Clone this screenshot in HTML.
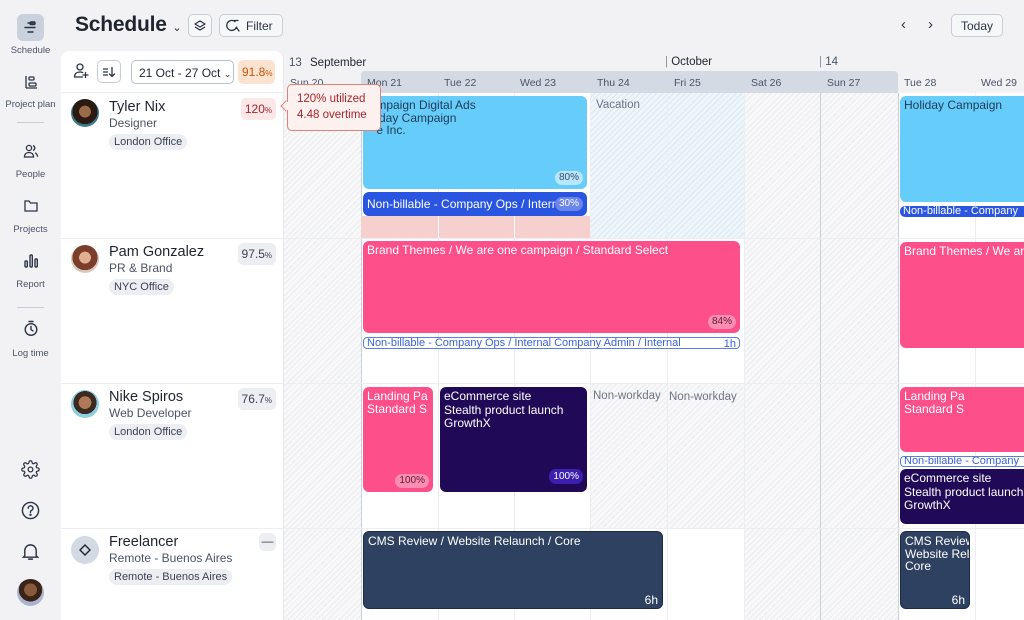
<!DOCTYPE html>
<html><head><meta charset="utf-8"><style>
*{box-sizing:border-box;margin:0;padding:0}
body{width:1024px;height:620px;overflow:hidden;background:#f2f2f5;font-family:"Liberation Sans",sans-serif;color:#1f2430;position:relative}
.a{position:absolute}
.nav{position:absolute;left:0;width:61px;text-align:center;font-size:9.5px;color:#4a5366}
.nav svg{display:block;margin:0 auto 6px}
.hatch{background:repeating-linear-gradient(135deg,#f8f8f9 0 3px,#ebecef 3px 4px)}
.hatchb{background:repeating-linear-gradient(135deg,#eef6fb 0 3px,#d9e8f2 3px 4px)}
.vl{position:absolute;top:93px;bottom:0;width:1px;background:#eceef1}
.hl{position:absolute;left:284px;right:0;height:1px;background:#eceef1}
.ev{position:absolute;border-radius:6px;font-size:12px;line-height:12.5px;padding:3px 4px;overflow:hidden;white-space:nowrap}
.pill{position:absolute;right:4px;bottom:4px;font-size:10px;padding:1px 4px;border-radius:7px}
.name{position:absolute;left:109px;font-size:14.5px;color:#1f2430}
.role{position:absolute;left:109px;font-size:12px;color:#4a5366}
.tag{position:absolute;left:109px;font-size:11px;color:#3a4254;background:#eceef2;border-radius:8px;padding:2px 5px}
.pct{position:absolute;right:748px;font-size:12px;background:#eceef2;border-radius:5px;padding:4px 4px;color:#3a4254}
.pct small{font-size:8px}
.av{position:absolute;left:71px;width:28px;height:28px;border-radius:50%}
.day{position:absolute;top:77px;font-size:10.5px;color:#4a5366}
</style></head><body>
<!-- sidebar -->
<div class="a" style="left:17px;top:14px;width:27px;height:27px;border-radius:6px;background:#c9d1dc"></div>
<svg class="a" style="left:22px;top:19px" width="17" height="17" viewBox="0 0 17 17" fill="none" stroke="#2b3445" stroke-width="1.4" stroke-linecap="round"><path d="M6 4h6M3 8.5h10M6 13h5"/><rect x="8" y="3" width="5" height="2.5" rx="1"/></svg>
<div class="nav" style="top:45px">Schedule</div>
<div class="nav" style="top:74px"><svg width="16" height="16" viewBox="0 0 16 16" fill="none" stroke="#2b3445" stroke-width="1.3"><path d="M3 2v12M3 14h11"/><rect x="6" y="3" width="5" height="3" rx="1"/><rect x="6" y="9" width="7" height="3" rx="1"/></svg><span style="position:relative;top:3px">Project plan</span></div>
<div class="a" style="left:17px;top:122px;width:27px;height:1px;background:#c6cdd8"></div>
<div class="nav" style="top:143px"><svg width="16" height="17" viewBox="0 0 16 17" fill="none" stroke="#2b3445" stroke-width="1.3"><circle cx="6" cy="5" r="2.6"/><path d="M1.5 14c0-3 2-4.5 4.5-4.5S10.5 11 10.5 14z"/><path d="M10 2.6a2.5 2.5 0 0 1 0 4.8M12 9.8c1.5.6 2.5 2 2.5 4"/></svg><span style="position:relative;top:3px">People</span></div>
<div class="nav" style="top:198px"><svg width="16" height="16" viewBox="0 0 16 16" fill="none" stroke="#2b3445" stroke-width="1.3"><path d="M2 3h4l1.5 2H14v8H2z"/></svg><span style="position:relative;top:4px">Projects</span></div>
<div class="nav" style="top:253px"><svg width="16" height="16" viewBox="0 0 16 16" fill="none" stroke="#2b3445" stroke-width="1.4"><rect x="2" y="8" width="2.3" height="6" rx="1"/><rect x="7" y="2" width="2.3" height="12" rx="1"/><rect x="12" y="6" width="2.3" height="8" rx="1"/></svg><span style="position:relative;top:4px">Report</span></div>
<div class="a" style="left:17px;top:307px;width:27px;height:1px;background:#c6cdd8"></div>
<div class="nav" style="top:320px"><svg width="16" height="17" viewBox="0 0 16 17" fill="none" stroke="#2b3445" stroke-width="1.4" stroke-linecap="round"><circle cx="8" cy="9.5" r="5.8"/><path d="M6 1.5h4M8 6.5v3l2 1.5"/></svg><span style="position:relative;top:5px">Log time</span></div>
<svg class="a" style="left:21px;top:460px" width="19" height="19" viewBox="0 0 24 24" fill="none" stroke="#2b3445" stroke-width="1.6"><circle cx="12" cy="12" r="3"/><path d="M19.4 15a1.7 1.7 0 0 0 .3 1.8l.1.1a2 2 0 1 1-2.8 2.8l-.1-.1a1.7 1.7 0 0 0-1.8-.3 1.7 1.7 0 0 0-1 1.5V21a2 2 0 1 1-4 0v-.1a1.7 1.7 0 0 0-1.1-1.5 1.7 1.7 0 0 0-1.8.3l-.1.1a2 2 0 1 1-2.8-2.8l.1-.1a1.7 1.7 0 0 0 .3-1.8 1.7 1.7 0 0 0-1.5-1H3a2 2 0 1 1 0-4h.1a1.7 1.7 0 0 0 1.5-1.1 1.7 1.7 0 0 0-.3-1.8l-.1-.1a2 2 0 1 1 2.8-2.8l.1.1a1.7 1.7 0 0 0 1.8.3H9a1.7 1.7 0 0 0 1-1.5V3a2 2 0 1 1 4 0v.1a1.7 1.7 0 0 0 1 1.5 1.7 1.7 0 0 0 1.8-.3l.1-.1a2 2 0 1 1 2.8 2.8l-.1.1a1.7 1.7 0 0 0-.3 1.8V9a1.7 1.7 0 0 0 1.5 1H21a2 2 0 1 1 0 4h-.1a1.7 1.7 0 0 0-1.5 1z"/></svg>
<svg class="a" style="left:21px;top:501px" width="19" height="19" viewBox="0 0 20 20" fill="none" stroke="#2b3445" stroke-width="1.5" stroke-linecap="round"><circle cx="10" cy="10" r="8.5"/><path d="M7.6 7.6a2.5 2.5 0 1 1 3.4 2.3c-.6.3-1 .8-1 1.5v.6"/><circle cx="10" cy="14.6" r=".5" fill="#2b3445"/></svg>
<svg class="a" style="left:21px;top:542px" width="19" height="19" viewBox="0 0 20 20" fill="none" stroke="#2b3445" stroke-width="1.5" stroke-linecap="round"><path d="M4 14.5V9a6 6 0 0 1 12 0v5.5l1.5 1.5h-15zM8 18h4"/></svg>
<div class="a" style="left:17px;top:579px;width:27px;height:27px;border-radius:50%;background:radial-gradient(circle at 50% 40%,#8a5a3c 0 30%,#3a2418 31% 55%,#aab4cf 56%)"></div>

<!-- top bar -->
<div class="a" style="left:75px;top:13px;font-size:21px;font-weight:bold;color:#1f2430;letter-spacing:-.2px">Schedule <span style="font-size:11px;font-weight:normal">⌄</span></div>
<div class="a" style="left:188px;top:14px;width:24px;height:23px;border:1px solid #c6cdd8;border-radius:5px;background:#f6f7f9"><svg style="position:absolute;left:4px;top:4px" width="14" height="14" viewBox="0 0 14 14" fill="none" stroke="#2b3445" stroke-width="1.3" stroke-linejoin="round"><path d="M7 2l5 3-5 3-5-3z"/><path d="M2 8l5 3 5-3"/></svg></div>
<div class="a" style="left:219px;top:14px;width:64px;height:23px;border:1px solid #c6cdd8;border-radius:5px;background:#f6f7f9;font-size:12px;padding:4px 0 0 26px;color:#2b3445">Filter<svg style="position:absolute;left:6px;top:4px" width="14" height="14" viewBox="0 0 14 14" fill="none" stroke="#2b3445" stroke-width="1.3" stroke-linecap="round"><path d="M9 2.6A5 5 0 1 0 10.5 8M8 1.5h4M10.5 8.5l2.5 3.5"/></svg></div>
<div class="a" style="left:901px;top:16px;font-size:15px;color:#2b3445">‹</div>
<div class="a" style="left:928px;top:16px;font-size:15px;color:#2b3445">›</div>
<div class="a" style="left:951px;top:14px;width:52px;height:23px;border:1px solid #c6cdd8;border-radius:5px;background:#f6f7f9;font-size:12px;text-align:center;padding-top:4px;color:#2b3445">Today</div>

<!-- calendar area -->
<div class="a" style="left:284px;top:93px;right:0;bottom:0;background:#fff"></div>
<div class="a hatch" style="left:284px;top:93px;width:77px;bottom:0"></div>
<div class="a hatch" style="left:744px;top:93px;width:154px;bottom:0"></div>
<div class="a hatchb" style="left:590px;top:93px;width:154px;height:145px"></div>
<div class="a hatch" style="left:590px;top:383px;width:154px;height:145px"></div>
<div class="vl" style="left:361px;background:#c9d1dc"></div>
<div class="vl" style="left:438px"></div><div class="vl" style="left:514px"></div><div class="vl" style="left:590px"></div><div class="vl" style="left:667px"></div><div class="vl" style="left:744px"></div><div class="vl" style="left:820px;background:#c9d1dc"></div><div class="vl" style="left:898px;background:#c9d1dc"></div><div class="vl" style="left:975px"></div>
<div class="hl" style="top:238px"></div><div class="hl" style="top:383px"></div><div class="hl" style="top:528px"></div>
<!-- header -->
<div class="a" style="left:284px;top:51px;right:0;height:42px;background:#f2f2f5"></div>
<div class="a" style="left:361px;top:71px;width:537px;height:22px;background:#d3dae4;border-radius:4px 4px 0 0"></div>
<div class="a" style="left:289px;top:57px;font-size:11.5px;color:#4a5366">13 <span style="color:#1f2430;margin-left:5px">September</span></div>
<div class="a" style="left:665px;top:56px;font-size:11.5px;color:#1f2430"><span style="color:#8a93a5">|</span> October</div>
<div class="a" style="left:819px;top:56px;font-size:11.5px;color:#4a5366"><span style="color:#8a93a5">|</span> 14</div>
<div class="day" style="left:290px">Sun 20</div><div class="day" style="left:367px">Mon 21</div><div class="day" style="left:444px">Tue 22</div><div class="day" style="left:520px">Wed 23</div><div class="day" style="left:597px">Thu 24</div><div class="day" style="left:674px">Fri 25</div><div class="day" style="left:751px">Sat 26</div><div class="day" style="left:827px">Sun 27</div><div class="day" style="left:904px">Tue 28</div><div class="day" style="left:981px">Wed 29</div>

<!-- row1 events -->
<div class="a" style="left:361px;top:216px;width:229px;height:22px;background:#f6d0cf"></div>
<div class="a" style="left:438px;top:216px;width:1px;height:22px;background:#fff"></div><div class="a" style="left:514px;top:216px;width:1px;height:22px;background:#fff"></div>
<div class="ev" style="left:363px;top:96px;width:224px;height:93px;background:#66cdfb;color:#1f3a55;padding-left:0;padding-top:3px">&nbsp;&nbsp;&nbsp;&nbsp;mpaign Digital Ads<br>&nbsp;&nbsp;&nbsp;&nbsp;iday Campaign<br>&nbsp;&nbsp;&nbsp;&nbsp;e Inc.<span class="pill" style="background:#b8e6fd;color:#3a4d63">80%</span></div>
<div class="ev" style="left:363px;top:192px;width:224px;height:24px;background:#2a55e0;color:#fff;padding-top:6px">Non-billable - Company Ops / Intern<span class="pill" style="background:#6b86ea;color:#fff;bottom:5px">30%</span></div>
<div class="a" style="left:596px;top:99px;font-size:11.5px;color:#6b7385">Vacation</div>
<div class="ev" style="left:900px;top:96px;width:130px;height:106px;background:#66cdfb;color:#1f3a55">Holiday Campaign</div>
<div class="ev" style="left:900px;top:206px;width:130px;height:11px;background:#2a55e0;color:#fff;font-size:11px;line-height:10px;padding:0 3px;border-radius:5px">Non-billable - Company</div>
<!-- row2 -->
<div class="ev" style="left:363px;top:241px;width:377px;height:92px;background:#fd4f8a;color:#fff">Brand Themes / We are one campaign / Standard Select<span class="pill" style="background:#fd8db2;color:#5a2136">84%</span></div>
<div class="ev" style="left:363px;top:337px;width:377px;height:12px;border:1px solid #5b7fe0;color:#3b62d6;font-size:11px;line-height:10px;padding:0 3px;border-radius:4px;background:#fff">Non-billable - Company Ops / Internal Company Admin / Internal<span style="position:absolute;right:3px;top:1px">1h</span></div>
<div class="ev" style="left:900px;top:242px;width:130px;height:106px;background:#fd4f8a;color:#fff">Brand Themes / We are</div>
<!-- row3 -->
<div class="ev" style="left:363px;top:387px;width:70px;height:105px;background:#fd4f8a;color:#fff">Landing Pa<br>Standard S<span class="pill" style="background:#fd8db2;color:#5a2136">100%</span></div>
<div class="ev" style="left:440px;top:387px;width:147px;height:105px;background:#200a58;color:#fff;line-height:13.5px">eCommerce site<br>Stealth product launch<br>GrowthX<span class="pill" style="background:#3c1fb0;color:#fff;bottom:8px">100%</span></div>
<div class="a" style="left:593px;top:390px;font-size:11.5px;color:#6b7385">Non-workday</div>
<div class="a" style="left:669px;top:391px;font-size:11.5px;color:#6b7385">Non-workday</div>
<div class="ev" style="left:900px;top:387px;width:130px;height:65px;background:#fd4f8a;color:#fff">Landing Pa<br>Standard S</div>
<div class="ev" style="left:900px;top:456px;width:130px;height:11px;border:1px solid #5b7fe0;color:#3b62d6;font-size:11px;line-height:9px;padding:0 3px;border-radius:4px;background:#fff">Non-billable - Company</div>
<div class="ev" style="left:900px;top:469px;width:130px;height:55px;background:#200a58;color:#fff;line-height:13.5px">eCommerce site<br>Stealth product launch<br>GrowthX</div>
<!-- row4 -->
<div class="ev" style="left:363px;top:531px;width:300px;height:78px;background:#2f4161;color:#fff;border:1px solid #1e2b45">CMS Review / Website Relaunch / Core<span style="position:absolute;right:4px;bottom:2px;font-size:12px">6h</span></div>
<div class="ev" style="left:900px;top:531px;width:70px;height:78px;background:#2f4161;color:#fff;border:1px solid #1e2b45">CMS Review<br>Website Rel<br>Core<span style="position:absolute;right:4px;bottom:2px">6h</span></div>

<!-- left panel -->
<div class="a" style="left:61px;top:51px;width:223px;height:569px;background:#fff;border-radius:8px 8px 0 0;border-right:1px solid #e6e8ec"></div>
<svg class="a" style="left:73px;top:62px" width="17" height="17" viewBox="0 0 17 17" fill="none" stroke="#2b3445" stroke-width="1.3" stroke-linecap="round"><circle cx="7" cy="5" r="3"/><path d="M1.5 15c0-3.5 2.5-5 5.5-5 1 0 2 .2 2.7.6M1.5 15h8M12.5 10.5v5M10 13h5"/></svg>
<div class="a" style="left:97px;top:60px;width:24px;height:23px;border:1px solid #c6cdd8;border-radius:5px"><svg style="position:absolute;left:4px;top:4px" width="14" height="14" viewBox="0 0 14 14" fill="none" stroke="#2b3445" stroke-width="1.3" stroke-linecap="round"><path d="M1.5 4h4M1.5 7h4M1.5 10h4M10 2.5v9M7.5 9l2.5 2.5L12.5 9"/></svg></div>
<div class="a" style="left:131px;top:60px;width:103px;height:24px;border:1px solid #b9c1cd;border-radius:5px;font-size:12px;padding:5px 0 0 7px;color:#1f2430">21 Oct - 27 Oct <span style="font-size:9px">⌄</span></div>
<div class="a" style="left:238px;top:60px;width:37px;height:24px;background:#fde3cf;border-radius:5px;font-size:12px;color:#c2570c;padding:5px 0 0 4px">91.8<small style="font-size:8px">%</small></div>
<div class="a" style="left:61px;top:92px;width:223px;height:1px;background:#eceef1"></div>
<div class="a" style="left:61px;top:238px;width:223px;height:1px;background:#eceef1"></div>
<div class="a" style="left:61px;top:383px;width:223px;height:1px;background:#eceef1"></div>
<div class="a" style="left:61px;top:528px;width:223px;height:1px;background:#eceef1"></div>

<div class="av" style="top:99px;background:radial-gradient(circle at 50% 45%,#9a6a4a 0 28%,#2a1a12 29% 60%,#3b7a8a 61%)"></div>
<div class="name" style="top:99px">Tyler Nix</div><div class="role" style="top:116px">Designer</div><div class="tag" style="top:134px">London Office</div>
<div class="pct" style="top:98px;background:#fbe7e7;color:#a3262a">120<small>%</small></div>

<div class="av" style="top:245px;background:radial-gradient(circle at 50% 45%,#e0b090 0 28%,#7a3e2a 29% 60%,#d9c8bd 61%)"></div>
<div class="name" style="top:244px">Pam Gonzalez</div><div class="role" style="top:261px">PR &amp; Brand</div><div class="tag" style="top:279px">NYC Office</div>
<div class="pct" style="top:243px">97.5<small>%</small></div>

<div class="av" style="top:390px;background:radial-gradient(circle at 50% 45%,#b07a58 0 30%,#3a2a20 31% 55%,#8fd0e0 56%)"></div>
<div class="name" style="top:389px">Nike Spiros</div><div class="role" style="top:406px">Web Developer</div><div class="tag" style="top:424px">London Office</div>
<div class="pct" style="top:388px">76.7<small>%</small></div>

<div class="av" style="top:536px;background:#d3dae4"></div>
<svg class="a" style="left:78px;top:543px" width="14" height="14" viewBox="0 0 14 14" fill="none" stroke="#1f2430" stroke-width="1.4"><path d="M7 2l5 5-5 5-5-5z"/></svg>
<div class="name" style="top:534px">Freelancer</div><div class="role" style="top:551px">Remote - Buenos Aires</div><div class="tag" style="top:569px">Remote - Buenos Aires</div>
<div class="pct" style="top:533px;width:17px;height:18px;padding:0;text-align:center;line-height:16px">—</div>

<!-- tooltip -->
<div class="a" style="left:287px;top:84px;width:94px;height:47px;background:#fdf1ef;border:1px solid #d9837b;border-radius:5px;font-size:11.5px;line-height:16px;color:#a3262a;padding:6px 0 0 9px">120% utilized<br>4.48 overtime</div>
<div class="a" style="left:282px;top:102px;width:8px;height:8px;background:#fdf1ef;border-left:1px solid #d9837b;border-bottom:1px solid #d9837b;transform:rotate(45deg)"></div>
</body></html>
